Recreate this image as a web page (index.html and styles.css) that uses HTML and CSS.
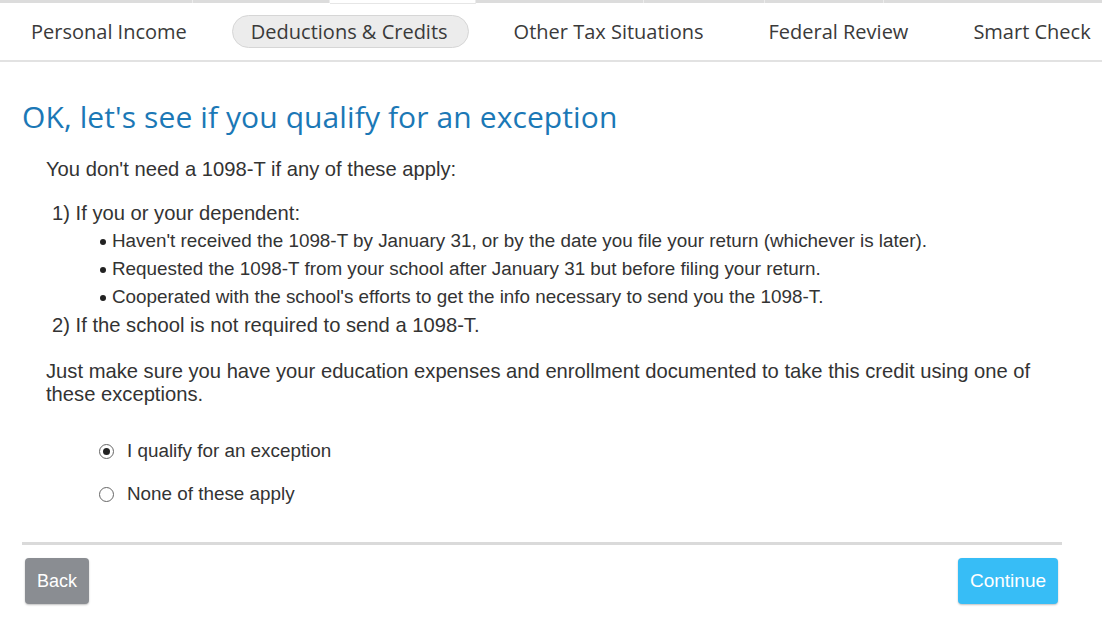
FILE: index.html
```html
<!DOCTYPE html>
<html>
<head>
<meta charset="utf-8">
<link rel="stylesheet" href="styles.css">
</head>
<body>
<div class="progress">
  <span class="seg" style="width:193px"></span>
  <span class="seg" style="width:137px"></span>
  <span class="seg cur" style="width:146px"></span>
  <span class="seg" style="width:168px"></span>
  <span class="seg" style="width:121px"></span>
  <span class="seg" style="width:119px"></span>
  <span class="seg fill"></span>
</div>
<nav class="tabs">
  <span class="tab">Personal Income</span>
  <span class="tab active">Deductions &amp; Credits</span>
  <span class="tab">Other Tax Situations</span>
  <span class="tab">Federal Review</span>
  <span class="tab">Smart Check</span>
</nav>
<main class="page">
  <h1 class="title">OK, let's see if you qualify for an exception</h1>
  <div class="body">
    <p class="intro">You don't need a 1098-T if any of these apply:</p>
    <div class="cases">
      <div class="case">1) If you or your dependent:</div>
      <ul class="bullets">
        <li>Haven't received the 1098-T by January 31, or by the date you file your return (whichever is later).</li>
        <li>Requested the 1098-T from your school after January 31 but before filing your return.</li>
        <li>Cooperated with the school's efforts to get the info necessary to send you the 1098-T.</li>
      </ul>
      <div class="case">2) If the school is not required to send a 1098-T.</div>
    </div>
    <p class="note">Just make sure you have your education expenses and enrollment documented to take this credit using one of these exceptions.</p>
    <div class="choices">
      <label class="choice"><span class="radio on"></span>I qualify for an exception</label>
      <label class="choice"><span class="radio"></span>None of these apply</label>
    </div>
  </div>
  <div class="rule"></div>
  <div class="actions">
    <button class="btn back">Back</button>
    <button class="btn go">Continue</button>
  </div>
</main>
</body>
</html>
```
FILE: styles.css
```css
* { box-sizing: border-box; }
html, body { margin: 0; padding: 0; background: #fff; }
body { width: 1102px; height: 618px; overflow: hidden; font-family: "Liberation Sans", Arial, sans-serif; color: #333; }

.progress { display: flex; height: 4px; }
.seg { height: 3px; background: #dcdcdc; border-right: 1px solid #ececec; flex: none; }
.seg.cur { background: #fff; border-bottom: 1px solid #e6e6e6; height: 4px; }
.seg.fill { flex: 1; border-right: 0; }

.tabs { display: flex; align-items: center; height: 58px; padding-left: 11px; gap: 25px; border-bottom: 2px solid #e2e2e2; white-space: nowrap; padding-bottom: 2px; }
.tab { font-family: "Open Sans", "Lato", sans-serif; font-size: 20px; color: #3a3a3a; padding: 0 19px; height: 33px; display: flex; align-items: center; border: 1px solid transparent; border-radius: 17px; }
.tab.active { background: #ececec; border-color: #d6d6d6; padding: 0 20px 0 18px; }

.page { padding: 0 40px 0 22px; }
.title { font-family: "Open Sans", "Lato", sans-serif; font-weight: 400; font-size: 30px; line-height: 34px; color: #1b78b6; margin: 38px 0 0; letter-spacing: 0.1px; }

.body { padding-left: 24px; font-size: 18.85px; }
.intro { margin: 23px 0 0; line-height: 24px; font-size: 20.2px; }
.cases { margin-top: 18px; padding-left: 6px; }
.case { line-height: 28px; font-size: 20.2px; }
.bullets { margin: 0; padding-left: 60px; list-style: none; }
.bullets li { line-height: 28px; position: relative; }
.bullets li::before { content: ""; position: absolute; left: -12px; top: 12px; width: 6px; height: 6px; border-radius: 50%; background: #222; }
.note { margin: 21px 0 0; line-height: 23px; font-size: 20.2px; }
.choices { margin-top: 32px; padding-left: 53px; display: flex; flex-direction: column; gap: 17px; }
.choice { display: flex; align-items: center; line-height: 26px; gap: 13px; }
.radio { width: 15px; height: 15px; border: 1px solid #666; border-radius: 50%; display: flex; align-items: center; justify-content: center; background: #fff; }
.radio.on::after { content: ""; width: 7px; height: 7px; border-radius: 50%; background: #222; }

.rule { height: 3px; background: #dadada; margin-top: 35px; }
.actions { display: flex; justify-content: space-between; padding: 13px 4px 0 3px; }
.btn { font-family: "Liberation Sans", Arial, sans-serif; font-size: 19px; color: #fff; border: 0; border-radius: 4px; height: 46px; padding: 0 10px; box-shadow: 0 1px 2px rgba(0,0,0,0.25); }
.btn.back { background: #8a8d92; width: 64px; font-size: 18px; }
.btn.go { background: #37bdf6; width: 100px; }
```
